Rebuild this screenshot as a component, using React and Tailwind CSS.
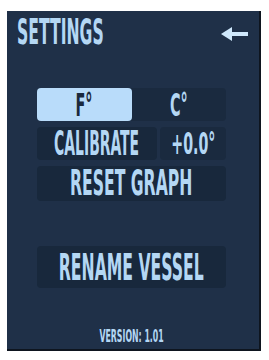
import React from "react";

const F = "font-['DejaVu_Sans_Condensed','DejaVu_Sans',sans-serif] font-bold";

function T({ children, className = "" }) {
  return (
    <span className={`inline-block shrink-0 whitespace-nowrap leading-none ${F} ${className}`}>
      {children}
    </span>
  );
}

export default function App() {
  return (
    <div className="w-[269px] h-[360px] bg-white pt-[11px] pl-[7px]">
      <div className="w-[254px] h-[340px] bg-[#1f3048] border-r-2 border-b-2 border-[#0e151f] flex flex-col">
        <div className="flex items-center justify-between pl-[10px] pr-[11px] h-[42px]">
          <T className="text-[36px] text-[#b4d7f4] scale-x-[0.483] origin-left">SETTINGS</T>
          <svg width="27" height="14" viewBox="0 0 27 14" className="mt-[4px] shrink-0">
            <polygon points="0,7 11,0 11,14" fill="#cfe8fc" />
            <rect x="9" y="5" width="18" height="4" fill="#cfe8fc" />
          </svg>
        </div>
        <div className="pl-[30px] pr-[33px] pt-[35px] flex flex-col">
          <div className="flex h-[33px] rounded-[4px] bg-[#1a2a3f]">
            <div className="w-[95px] shrink-0 min-w-0 bg-[#b9dcfa] rounded-[4px] flex items-center justify-center">
              <T className="text-[32px] text-[#1a293d] scale-x-[0.5]">F°</T>
            </div>
            <div className="flex-1 min-w-0 flex items-center justify-center">
              <T className="text-[32px] text-[#b4d7f4] scale-x-[0.5]">C°</T>
            </div>
          </div>
          <div className="flex h-[33px] mt-[6px] gap-[3px]">
            <div className="w-[120px] shrink-0 min-w-0 rounded-[4px] bg-[#18283c] flex items-center justify-center">
              <T className="text-[33px] text-[#b4d7f4] scale-x-[0.47]">CALIBRATE</T>
            </div>
            <div className="flex-1 min-w-0 rounded-[4px] bg-[#1a2a3f] flex items-center justify-center">
              <T className="text-[31px] text-[#b4d7f4] scale-x-[0.51]">+0.0°</T>
            </div>
          </div>
          <div className="flex h-[35px] mt-[6px] rounded-[4px] bg-[#18283c] items-center justify-center">
            <T className="text-[35px] text-[#b4d7f4] scale-x-[0.497]">RESET GRAPH</T>
          </div>
          <div className="flex h-[42px] mt-[45px] rounded-[4px] bg-[#18283c] items-center justify-center">
            <T className="text-[38px] text-[#b4d7f4] scale-x-[0.458]">RENAME VESSEL</T>
          </div>
          <div className="flex justify-center mt-[39px]">
            <T className="text-[18px] text-[#b4d7f4] scale-x-[0.483]">VERSION: 1.01</T>
          </div>
        </div>
      </div>
    </div>
  );
}
